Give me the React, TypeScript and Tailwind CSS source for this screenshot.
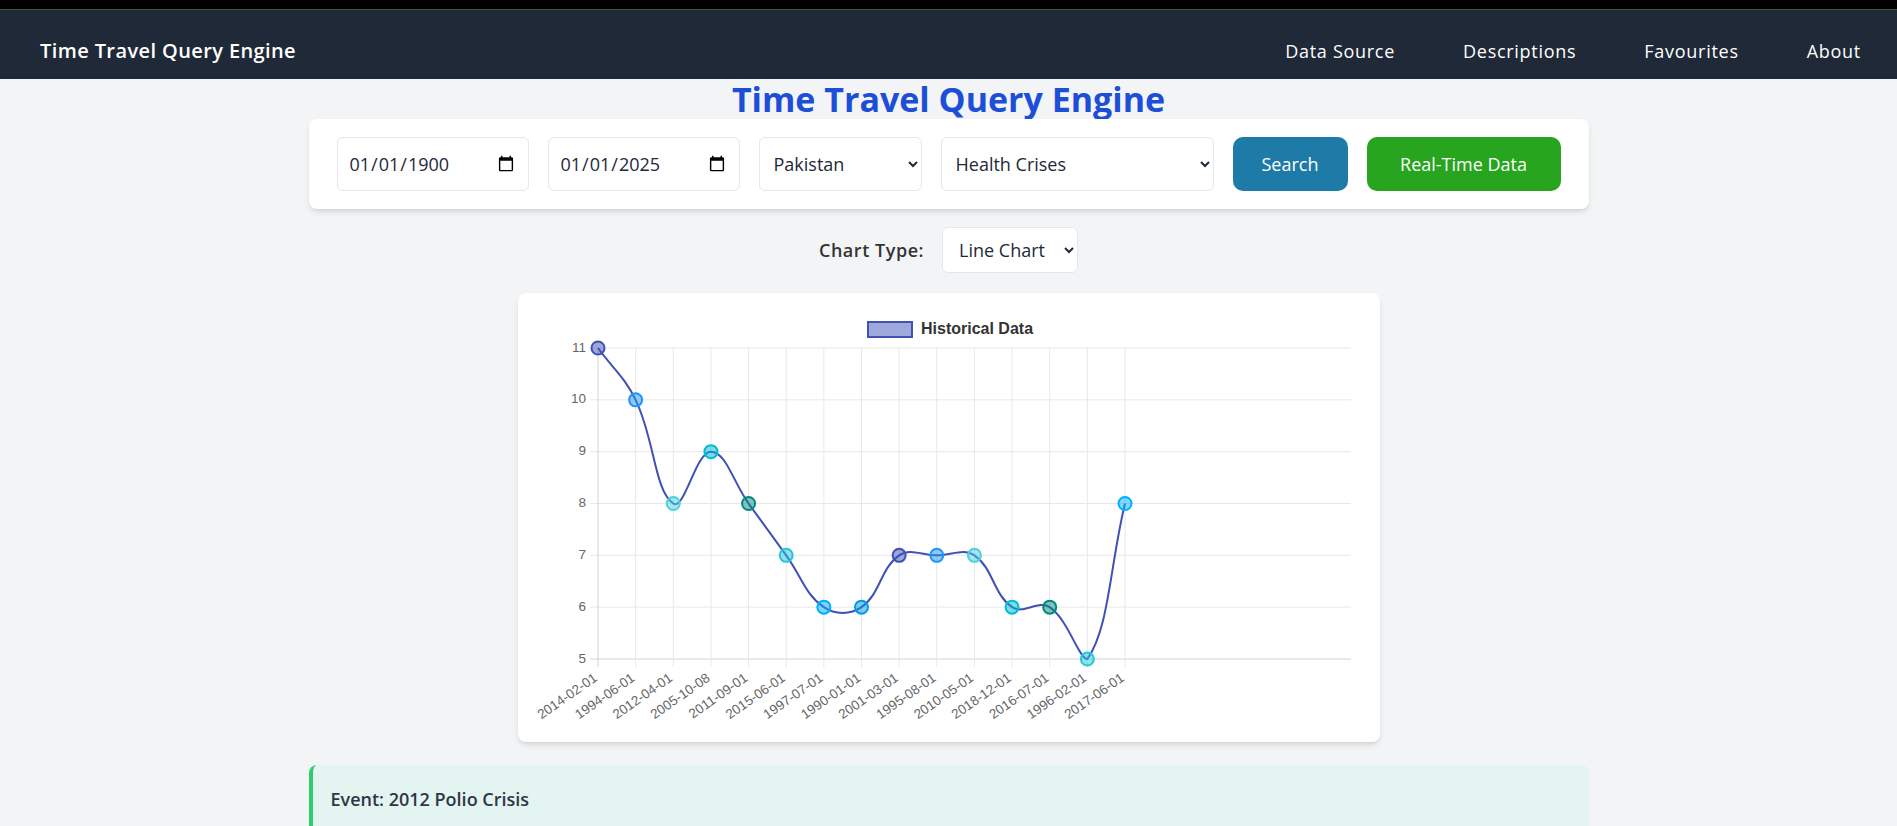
import React from "react";

const labels = [
	"2014-02-01",
	"1994-06-01",
	"2012-04-01",
	"2005-10-08",
	"2011-09-01",
	"2015-06-01",
	"1997-07-01",
	"1990-01-01",
	"2001-03-01",
	"1995-08-01",
	"2010-05-01",
	"2018-12-01",
	"2016-07-01",
	"1996-02-01",
	"2017-06-01",
];
const values = [11, 10, 8, 9, 8, 7, 6, 6, 7, 7, 7, 6, 6, 5, 8];
const palette = ["#3f51b5", "#2196f3", "#4dd0e1", "#00bcd4", "#00897b", "#26c6da", "#00b0ff", "#039be5"];

// chart area inside the card
const area = { left: 80, right: 833, top: 55, bottom: 366 };
const step = 527 / 14;
const xFor = (i: number) => area.left + i * step;
const yFor = (v: number) => area.bottom - (v - 5) * (311 / 6);

type Pt = { x: number; y: number };

const clamp = (v: number, a: number, b: number) => Math.max(a, Math.min(b, v));

// same idea as chart.js splineCurve, tension 0.4
const buildPath = (pts: Pt[]) => {
	const t = 0.4;
	const ctrl = pts.map((cur, i) => {
		const prev = pts[i - 1] ?? cur;
		const next = pts[i + 1] ?? cur;
		const d01 = Math.hypot(cur.x - prev.x, cur.y - prev.y);
		const d12 = Math.hypot(next.x - cur.x, next.y - cur.y);
		const s01 = d01 + d12 === 0 ? 0 : d01 / (d01 + d12);
		const s12 = d01 + d12 === 0 ? 0 : d12 / (d01 + d12);
		const fa = t * s01;
		const fb = t * s12;
		const cap = (p: Pt) => ({ x: clamp(p.x, area.left, area.right), y: clamp(p.y, area.top, area.bottom) });
		return {
			prev: cap({ x: cur.x - fa * (next.x - prev.x), y: cur.y - fa * (next.y - prev.y) }),
			next: cap({ x: cur.x + fb * (next.x - prev.x), y: cur.y + fb * (next.y - prev.y) }),
		};
	});
	let d = `M ${pts[0].x} ${pts[0].y}`;
	for (let i = 1; i < pts.length; i++) {
		const a = ctrl[i - 1].next;
		const b = ctrl[i].prev;
		d += ` C ${a.x} ${a.y} ${b.x} ${b.y} ${pts[i].x} ${pts[i].y}`;
	}
	return d;
};

const HistoryChart = () => {
	const pts = values.map((v, i) => ({ x: xFor(i), y: yFor(v) }));
	const ticks = [11, 10, 9, 8, 7, 6, 5];

	return (
		<svg width={862} height={449} className="block" style={{ fontFamily: "'Liberation Sans', Arial, sans-serif" }}>
			{/* legend */}
			<rect x={350} y={29} width={44} height={15} fill="#3f51b5" fillOpacity={0.5} stroke="#3f51b5" strokeWidth={2} />
			<text x={403} y={37} dominantBaseline="middle" fontSize={16} fontWeight={700} fill="#333">
				Historical Data
			</text>

			{/* grid */}
			{ticks.map((v) => (
				<line
					key={`h${v}`}
					x1={area.left - 8}
					x2={area.right}
					y1={yFor(v)}
					y2={yFor(v)}
					stroke={v === 5 ? "#d4d4d4" : "#e8e8e8"}
					strokeWidth={1}
				/>
			))}
			{labels.map((_, i) => (
				<line
					key={`v${i}`}
					x1={xFor(i)}
					x2={xFor(i)}
					y1={area.top}
					y2={area.bottom + 8}
					stroke={i === 0 ? "#d4d4d4" : "#e8e8e8"}
					strokeWidth={1}
				/>
			))}

			{/* y labels */}
			{ticks.map((v) => (
				<text key={`yl${v}`} x={area.left - 12} y={yFor(v)} textAnchor="end" dominantBaseline="middle" fontSize={13.5} fill="#666">
					{v}
				</text>
			))}

			{/* x labels */}
			{labels.map((l, i) => (
				<text
					key={l}
					transform={`translate(${xFor(i) - 2} ${area.bottom + 18}) rotate(-35)`}
					textAnchor="end"
					dominantBaseline="middle"
					fontSize={13.5}
					fill="#666"
				>
					{l}
				</text>
			))}

			{/* line */}
			<path d={buildPath(pts)} fill="none" stroke="#3f51b5" strokeWidth={2} />

			{/* points */}
			{pts.map((p, i) => {
				const c = palette[i % palette.length];
				return <circle key={i} cx={p.x} cy={p.y} r={6.5} fill={c} fillOpacity={0.5} stroke={c} strokeWidth={2} />;
			})}
		</svg>
	);
};

const App = () => {
	return (
		<div className="min-h-screen bg-gray-100 font-['Open_Sans',sans-serif] text-gray-800">
			<div className="h-[9px] bg-black" />
			<div className="h-px bg-[#4a4a4a]" />
			<nav className="h-[69px] bg-[#1f2937] flex items-center justify-between pl-10 pr-9 pt-[13px]">
				<span className="text-white text-xl font-semibold tracking-[0.02em]">Time Travel Query Engine</span>
				<div className="flex items-center gap-[68px] text-white text-lg tracking-[0.04em]">
					<a href="#">Data Source</a>
					<a href="#">Descriptions</a>
					<a href="#">Favourites</a>
					<a href="#">About</a>
				</div>
			</nav>

			<main className="flex flex-col items-center">
				<h1 className="text-[34px] leading-[40px] font-bold text-[#1d4ed8]">Time Travel Query Engine</h1>

				<div className="w-full max-w-7xl bg-white rounded-lg shadow-md flex justify-center items-center gap-[19px] py-[18px]">
					<input
						type="date"
						defaultValue="1900-01-01"
						className="w-[192px] h-[54px] px-[11px] border border-gray-200 rounded-md text-lg text-gray-800 bg-white"
					/>
					<input
						type="date"
						defaultValue="2025-01-01"
						className="w-[192px] h-[54px] px-[11px] border border-gray-200 rounded-md text-lg text-gray-800 bg-white"
					/>
					<select className="w-[163px] h-[54px] px-[10px] border border-gray-200 rounded-md text-lg text-gray-800 bg-white">
						<option>Pakistan</option>
					</select>
					<select className="w-[273px] h-[54px] px-[10px] border border-gray-200 rounded-md text-lg text-gray-800 bg-white">
						<option>Health Crises</option>
					</select>
					<button className="w-[115px] h-[54px] rounded-[10px] bg-[#1e7ba7] text-white text-lg">Search</button>
					<button className="w-[194px] h-[54px] rounded-[10px] bg-[#27a51f] text-white text-lg">Real-Time Data</button>
				</div>

				<div className="mt-[18px] flex items-center gap-[18px]">
					<span className="text-lg font-semibold text-[#333] tracking-[0.03em]">Chart Type:</span>
					<select className="w-[136px] h-[46px] px-3 border border-gray-200 rounded-md text-lg text-gray-800 bg-white">
						<option>Line Chart</option>
						<option>Bar Chart</option>
					</select>
				</div>

				<div className="mt-5 w-[862px] h-[449px] bg-white rounded-lg shadow-md">
					<HistoryChart />
				</div>

				<div className="mt-[23px] mb-10 w-full max-w-7xl bg-[#e4f4f0] border-l-4 border-[#2ecc71] rounded-lg pl-[18px] pr-4 py-5">
					<h3 className="text-lg font-semibold text-[#2d3748]">Event: 2012 Polio Crisis</h3>
					<p className="mt-3 text-base text-gray-700">
						A surge of polio cases was reported across several regions, prompting nationwide vaccination drives.
					</p>
				</div>
			</main>
		</div>
	);
};

export default App;
